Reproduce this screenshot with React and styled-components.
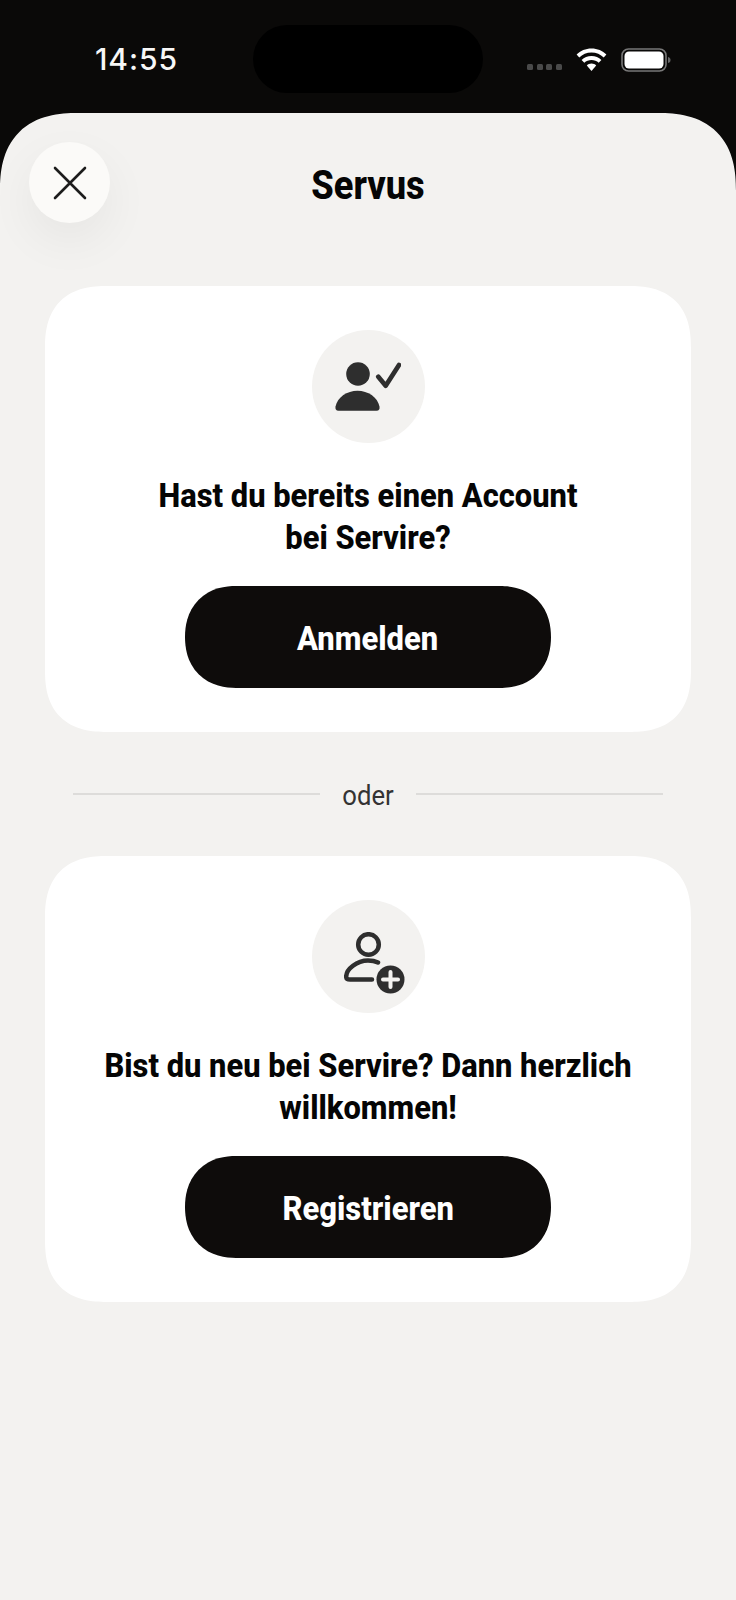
import React from 'react';
import styled, { createGlobalStyle } from 'styled-components';

const Global = createGlobalStyle`
   html, body { margin: 0; padding: 0; background: #0a0908; }
   * { box-sizing: border-box; }
`;

const Screen = styled.div`
   width: 736px;
   height: 1600px;
   display: flex;
   flex-direction: column;
   background: #0a0908;
   overflow: hidden;
   font-family: Roboto, "Liberation Sans", sans-serif;
`;

const StatusBar = styled.div`
   height: 113px;
   flex: none;
   display: grid;
   grid-template-columns: 253px 230px 1fr;
   padding-top: 25px;
   align-items: start;
`;

const Clock = styled.div`
   padding: 17px 0 0 95px;
   font-family: Inter, sans-serif;
   font-size: 30px;
   line-height: 34px;
   font-weight: 500;
   letter-spacing: 0.9px;
   color: #f7f7f7;
`;

const Island = styled.div`
   height: 68px;
   background: #000;
   border-radius: 34px;
`;

const StatusIcons = styled.div`
   display: flex;
   align-items: center;
   padding: 23px 0 0 44px;
`;

const Dots = styled.div`
   display: flex;
   gap: 3.6px;
   margin: 13px 14px 0 0;
`;

const Dot = styled.span`
   width: 6px;
   height: 6px;
   border-radius: 1.5px;
   background: #4a4a4a;
`;

const Sheet = styled.div`
   flex: 1;
   display: flex;
   flex-direction: column;
   background: #f3f2f0;
   border-radius: 78px 78px 0 0;
   corner-shape: superellipse(1.3);
   padding: 29px 45px 0;
`;

const Header = styled.div`
   display: grid;
   grid-template-columns: 81px 1fr 81px;
   align-items: center;
   margin: 0 -16px 63px;
`;

const CloseButton = styled.div`
   width: 81px;
   height: 81px;
   border-radius: 50%;
   background: #fbfaf8;
   box-shadow: 0 18px 48px rgba(0, 0, 0, 0.055);
   display: flex;
   align-items: center;
   justify-content: center;
`;

const Title = styled.div`
   text-align: center;
   font-size: 40px;
   line-height: 46px;
   font-weight: 800;
   color: #050505;
   padding-top: 6px;
   transform: scaleX(0.905);
`;

const Card = styled.div`
   height: 446px;
   background: #fff;
   border-radius: 62px;
   corner-shape: superellipse(1.3);
   display: flex;
   flex-direction: column;
   align-items: center;
   padding-top: 44px;
`;

const IconCircle = styled.div`
   width: 113px;
   height: 113px;
   border-radius: 50%;
   background: #f3f2f0;
   display: flex;
   align-items: center;
   justify-content: center;
`;

const OffsetIcon = styled.svg`
   margin: 12px 0 0 12px;
`;

const Question = styled.div`
   width: 640px;
   margin-top: 32px;
   text-align: center;
   font-size: 33px;
   line-height: 42px;
   font-weight: 800;
   color: #050505;
   transform: scaleX(0.935);
`;

const Button = styled.div`
   width: 366px;
   height: 102px;
   margin-top: 27px;
   padding-top: 2px;
   border-radius: 51px;
   corner-shape: superellipse(1.15);
   background: #0e0c0b;
   color: #fff;
   display: flex;
   align-items: center;
   justify-content: center;
   font-size: 34px;
   font-weight: 800;
`;

const ButtonLabel = styled.span`
   transform: scaleX(0.91);
`;

const Divider = styled.div`
   height: 124px;
   display: flex;
   align-items: center;
   justify-content: center;
   gap: 21px;
   margin: 0 28px;
`;

const Rule = styled.div`
   flex: 1;
   height: 2px;
   background: #dddcda;
`;

const Or = styled.div`
   font-size: 27px;
   color: #333;
   transform: scaleX(0.95);
   padding-top: 4px;
`;

function CloseIcon() {
   return (
      <svg width="34" height="34" viewBox="0 0 34 34" fill="none" stroke="#1c1c1c" strokeWidth="2.6" strokeLinecap="round">
         <path d="M2 2 L32 32 M32 2 L2 32" />
      </svg>
   );
}

function WifiIcon() {
   return (
      <svg width="31" height="24" viewBox="0 0 31 24" fill="#fff">
         <path d="M15.5 0.5C9.6 0.5 4.4 2.8 0.6 6.6L3.3 9.5C6.4 6.4 10.7 4.5 15.5 4.5S24.6 6.4 27.7 9.5L30.4 6.6C26.6 2.8 21.4 0.5 15.5 0.5Z" />
         <path d="M15.5 8C11.6 8 8.2 9.5 5.6 12L8.3 14.8C10.2 13 12.7 12 15.5 12S20.8 13 22.7 14.8L25.4 12C22.8 9.5 19.4 8 15.5 8Z" />
         <path d="M15.5 15.5C13.7 15.5 12 16.2 10.8 17.4L15.5 23 20.2 17.4C19 16.2 17.3 15.5 15.5 15.5Z" />
      </svg>
   );
}

function BatteryIcon() {
   return (
      <svg width="50" height="24" viewBox="0 0 50 24" style={{ marginLeft: 14 }}>
         <rect x="1" y="1" width="44" height="22" rx="6.5" fill="none" stroke="#777" strokeWidth="1.6" />
         <rect x="3.5" y="3.5" width="39" height="17" rx="4.5" fill="#fff" />
         <path d="M47 9 C49 9.5 49.5 10.5 49.5 12 S49 14.5 47 15Z" fill="#666" />
      </svg>
   );
}

function UserCheckIcon() {
   return (
      <svg width="66" height="49" viewBox="0 0 66 49" fill="#2e2e2e">
         <circle cx="23" cy="12" r="11.8" />
         <path d="M3.5 48.7 C1 48.7 0 47 0.5 44.5 C2.5 35 12 28.7 22.5 28.7 S42.5 35 44.5 44.5 C45 47 44 48.7 41.5 48.7Z" />
         <path d="M43.3 14.7 L50.7 23.7 L64 3" fill="none" stroke="#2e2e2e" strokeWidth="4.7" strokeLinecap="round" strokeLinejoin="round" />
      </svg>
   );
}

function UserPlusIcon() {
   return (
      <OffsetIcon as="svg" width="61" height="62" viewBox="0 0 61 62" fill="none">
         <circle cx="24.5" cy="12.5" r="10.3" stroke="#2e2e2e" strokeWidth="4.5" />
         <path d="M34 30.5 C31 29 27.500 28.500 24 28.500 C13 28.500 2.200 37 2.200 44.500 C2.200 46.800 3.500 47.500 6 47.500 L28 47.500" stroke="#2e2e2e" strokeWidth="4.5" strokeLinecap="round" />
         <circle cx="46.500" cy="47.500" r="14" fill="#2e2e2e" />
         <path d="M46.500 40 V55 M39 47.500 H54" stroke="#f3f2f0" strokeWidth="4" strokeLinecap="round" />
      </OffsetIcon>
   );
}

function AuthCard({ icon, lines, action }) {
   return (
      <Card>
         <IconCircle>{icon}</IconCircle>
         <Question>
            {lines[0]}
            <br />
            {lines[1]}
         </Question>
         <Button>
            <ButtonLabel>{action}</ButtonLabel>
         </Button>
      </Card>
   );
}

export default function App() {
   return (
      <Screen>
         <Global />
         <StatusBar>
            <Clock>14:55</Clock>
            <Island />
            <StatusIcons>
               <Dots>
                  <Dot />
                  <Dot />
                  <Dot />
                  <Dot />
               </Dots>
               <WifiIcon />
               <BatteryIcon />
            </StatusIcons>
         </StatusBar>
         <Sheet>
            <Header>
               <CloseButton>
                  <CloseIcon />
               </CloseButton>
               <Title>Servus</Title>
            </Header>
            <AuthCard
               icon={<UserCheckIcon />}
               lines={['Hast du bereits einen Account', 'bei Servire?']}
               action="Anmelden"
            />
            <Divider>
               <Rule />
               <Or>oder</Or>
               <Rule />
            </Divider>
            <AuthCard
               icon={<UserPlusIcon />}
               lines={['Bist du neu bei Servire? Dann herzlich', 'willkommen!']}
               action="Registrieren"
            />
         </Sheet>
      </Screen>
   );
}
